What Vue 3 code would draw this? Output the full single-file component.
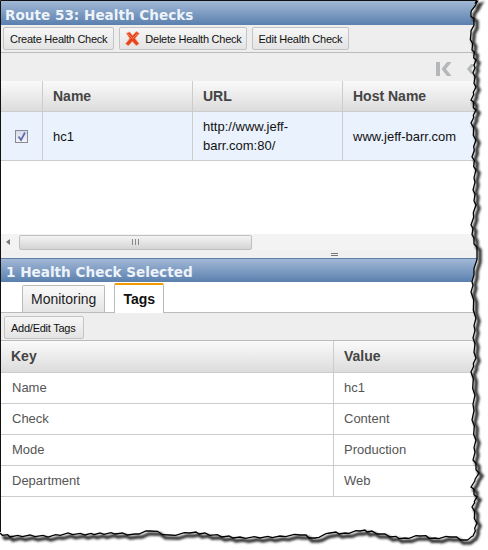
<template>
  <div class="shot">
    <div class="panel">
      <div class="title">Route 53: Health Checks</div>
      <div class="toolbar top">
        <button class="btn" type="button">Create Health Check</button>
        <button class="btn del" type="button">
          <svg class="xicon" width="15" height="15" viewBox="0 0 16 16">
            <path d="M1.5 2.5 5 1 8 4.8 12 .6 15.2 2.5 10.8 8 15 13.5 12 15.6 7.8 11.2 3.5 15.8 .6 13.6 5 8Z" fill="#e8431f" stroke="#efa27c" stroke-width=".8" />
            <path d="M3 3 8 8 13 3" fill="none" stroke="#f58a5c" stroke-width="1" />
          </svg>
          Delete Health Check
        </button>
        <button class="btn" type="button">Edit Health Check</button>
      </div>
      <div class="pager">
        <svg width="52" height="16" viewBox="0 0 52 16">
          <path d="M1 1h4v14H1ZM12 1h4.5L11 8l5.500 7H12L6.500 8Z" fill="#b4b8b8" />
          <path d="M32 8l4-5h4l-4 5 4 5h-4Z" fill="#b4b8b8" />
        </svg>
      </div>
      <div class="grid hosts">
        <div class="cell head"></div>
        <div class="cell head">Name</div>
        <div class="cell head">URL</div>
        <div class="cell head">Host Name</div>
        <div class="cell sel check">
          <span class="box">
            <svg width="11" height="11" viewBox="0 0 11 11"><path d="M2.500 5.500 5 9 9 1.500" fill="none" stroke="#5f6fb0" stroke-width="1.800" /></svg>
          </span>
        </div>
        <div class="cell sel">hc1</div>
        <div class="cell sel">http://www.jeff-barr.com:80/</div>
        <div class="cell sel nowrap">www.jeff-barr.com</div>
      </div>
      <div class="blank"></div>
      <div class="scrollbar">
        <span class="arrow"></span>
        <div class="thumb"><span class="grip"></span></div>
      </div>
      <div class="splitter"><span class="handle"></span></div>
      <div class="title second">1 Health Check Selected</div>
      <div class="tabs">
        <div class="tab">Monitoring</div>
        <div class="tab active">Tags</div>
      </div>
      <div class="toolbar lower">
        <button class="btn" type="button">Add/Edit Tags</button>
      </div>
      <div class="grid tags">
        <div class="cell head">Key</div>
        <div class="cell head">Value</div>
        <template v-for="t in tags" :key="t.key">
          <div class="cell plain">{{ t.key }}</div>
          <div class="cell plain">{{ t.value }}</div>
        </template>
      </div>
    </div>

    <!-- torn paper edge over the screenshot -->
    <svg class="edge" width="488" height="550" viewBox="0 0 488 550">
      <defs>
        <filter id="soft" x="-5%" y="-5%" width="110%" height="110%">
          <feGaussianBlur stdDeviation="1.300" />
        </filter>
      </defs>
      <path :d="outside" fill="#fff" fill-rule="evenodd" />
      <path :d="tornLine" transform="translate(3 3)" fill="none" stroke="#333" stroke-width="3.500" filter="url(#soft)" />
      <path :d="tornLine" fill="none" stroke="#000" stroke-width="1.300" />
      <path d="M0.500 532V0.500H477" fill="none" stroke="#111" stroke-width="1" />
    </svg>
  </div>
</template>

<script setup>
const tags = [
  { key: "Name", value: "hc1" },
  { key: "Check", value: "Content" },
  { key: "Mode", value: "Production" },
  { key: "Department", value: "Web" },
];

// traced by eye from the reference
const right = [
  [477, 0], [476, 4], [471, 12], [474, 23], [471, 33], [472, 50], [476, 60], [473, 73], [476, 87], [471, 100],
  [476, 110], [471, 123], [476, 140], [472, 157], [476, 170], [473, 190], [476, 205], [471, 225], [474, 238],
  [477, 253], [474, 275], [471, 292], [476, 318], [473, 338], [476, 358], [471, 372], [475, 395], [472, 420],
  [476, 440], [473, 460], [479, 473], [471, 487], [477, 497], [472, 507], [477, 523], [473, 536],
];
const bottom = [
  [467, 540], [450, 537], [435, 538], [420, 536], [405, 538], [390, 537], [372, 531], [360, 531], [345, 533],
  [330, 533], [315, 538], [300, 535], [280, 536], [260, 538], [240, 537], [222, 537], [205, 533], [190, 533],
  [170, 535], [150, 531], [135, 534], [115, 534], [100, 533], [85, 535], [68, 533], [48, 537], [30, 535],
  [10, 537], [0, 533],
];

// small wobble between the traced points so the edge looks ragged
const pts = [];
[...right, ...bottom].forEach((p, i, all) => {
  pts.push(p);
  const n = all[i + 1];
  if (!n) return;
  const wob = i % 2 ? 1 : -1;
  pts.push([(p[0] * 2 + n[0]) / 3 + wob, (p[1] * 2 + n[1]) / 3 - wob]);
  pts.push([(p[0] + n[0] * 2) / 3 - wob, (p[1] + n[1] * 2) / 3 + wob]);
});
const tornLine = "M" + pts.map((p) => p.join(" ")).join("L");
const outside = "M0 0H488V550H0Z" + tornLine + "L0 0Z";
</script>

<style>
html, body { margin: 0; background: #fff; }
</style>

<style scoped>
.shot {
  position: relative;
  width: 488px;
  height: 550px;
  overflow: hidden;
  background: #fff;
  font-family: "Liberation Sans", Arial, sans-serif;
  color: #333;
}
.panel { padding: 1px 0 0 1px; }
.edge { position: absolute; left: 0; top: 0; pointer-events: none; }

.title {
  height: 24px;
  line-height: 28px;
  padding-left: 4px;
  font-family: "DejaVu Sans", Verdana, sans-serif;
  font-weight: bold;
  font-size: 13.600px;
  color: #eef3fa;
  background: linear-gradient(#a2b8d6, #5a80ae);
}
.title.second { height: 23px; border-top: 1px solid #5f7ea6; line-height: 26px; padding-left: 5px; }

.toolbar {
  display: flex;
  gap: 5px;
  background: #eeeeee;
  border-bottom: 1px solid #bbb;
  box-sizing: border-box;
}
.toolbar.top { height: 28px; padding: 2px 0 0 2px; }
.toolbar.lower { height: 28px; padding: 3px 0 0 3px; }
.toolbar.lower .btn { padding-right: 8px; }

.btn {
  height: 23px;
  padding: 0 6px;
  display: flex;
  align-items: center;
  gap: 5px;
  border: 1px solid #c4c4c4;
  border-radius: 2px;
  background: linear-gradient(#f6f6f6, #e4e4e4);
  font-family: inherit;
  font-size: 11px;
  letter-spacing: -.25px;
  color: #111;
}
.del { padding: 0 4px 0 5px; }
.xicon { flex: none; }

.pager {
  height: 28px;
  background: #eeeeee;
  padding: 8px 0 0 434px;
  box-sizing: border-box;
}

.grid { display: grid; }
.hosts { grid-template-columns: 42px 150px 150px 150px; grid-template-rows: 31px 49px; }
.tags { grid-template-columns: 333px 160px; grid-template-rows: 32px 31px 31px 31px 31px; }

.cell {
  display: flex;
  align-items: center;
  padding: 0 10px;
  font-size: 13px;
  line-height: 19px;
  border-right: 1px solid #ccc;
  border-bottom: 1px solid #ccc;
  box-sizing: border-box;
}
.head {
  font-size: 14px;
  font-weight: bold;
  color: #444;
  background: linear-gradient(#fafafa, #dcdcdc);
}
.sel { background: #eaf2fd; color: #111; }
.nowrap { white-space: nowrap; }
.check { justify-content: center; padding: 0 1px 0 0; }
.box {
  width: 11px;
  height: 11px;
  border: 1px solid #8a8a96;
  background: linear-gradient(#d8dcea, #f4f4f8);
  display: block;
}
.box svg { display: block; }
.plain { color: #555; padding: 0 10px 2px 11px; }
.plain:nth-child(even) { padding-left: 10px; }

.blank { height: 73px; }

.scrollbar {
  height: 16px;
  position: relative;
  display: flex;
  align-items: center;
  background: #f3f3f3;
}
.arrow {
  margin-left: 5px;
  border: 3px solid transparent;
  border-left-width: 0;
  border-right: 4px solid #777;
}
.thumb {
  margin-left: 9px;
  width: 233px;
  height: 15px;
  border: 1px solid #c0c0c0;
  border-radius: 2px;
  box-sizing: border-box;
  background: linear-gradient(#f4f4f4, #d4d4d4);
  display: flex;
  align-items: center;
  justify-content: center;
}
.grip {
  width: 7px;
  height: 6px;
  background: repeating-linear-gradient(90deg, #888 0 1px, transparent 1px 3px);
}

.splitter {
  height: 8px;
  background: #f0f0f0;
  position: relative;
}
.handle {
  position: absolute;
  left: 330px;
  top: 3px;
  width: 7px;
  height: 3px;
  border-top: 1px solid #777;
  border-bottom: 1px solid #777;
  box-sizing: border-box;
}

.tabs {
  height: 31px;
  display: flex;
  align-items: flex-end;
  gap: 9px;
  padding-left: 21px;
  border-bottom: 1px solid #bbb;
  box-sizing: border-box;
  background: #fff;
}
.tab {
  height: 26px;
  padding: 0 8px;
  display: flex;
  align-items: center;
  font-size: 14px;
  color: #222;
  border: 1px solid #bbb;
  border-bottom: 0;
  border-radius: 2px 2px 0 0;
  background: linear-gradient(#fafafa, #e4e4e4);
}
.tab.active {
  height: 28px;
  margin-bottom: -1px;
  font-weight: bold;
  color: #111;
  background: #fff;
  border-top: 2px solid #f29a00;
}
</style>
